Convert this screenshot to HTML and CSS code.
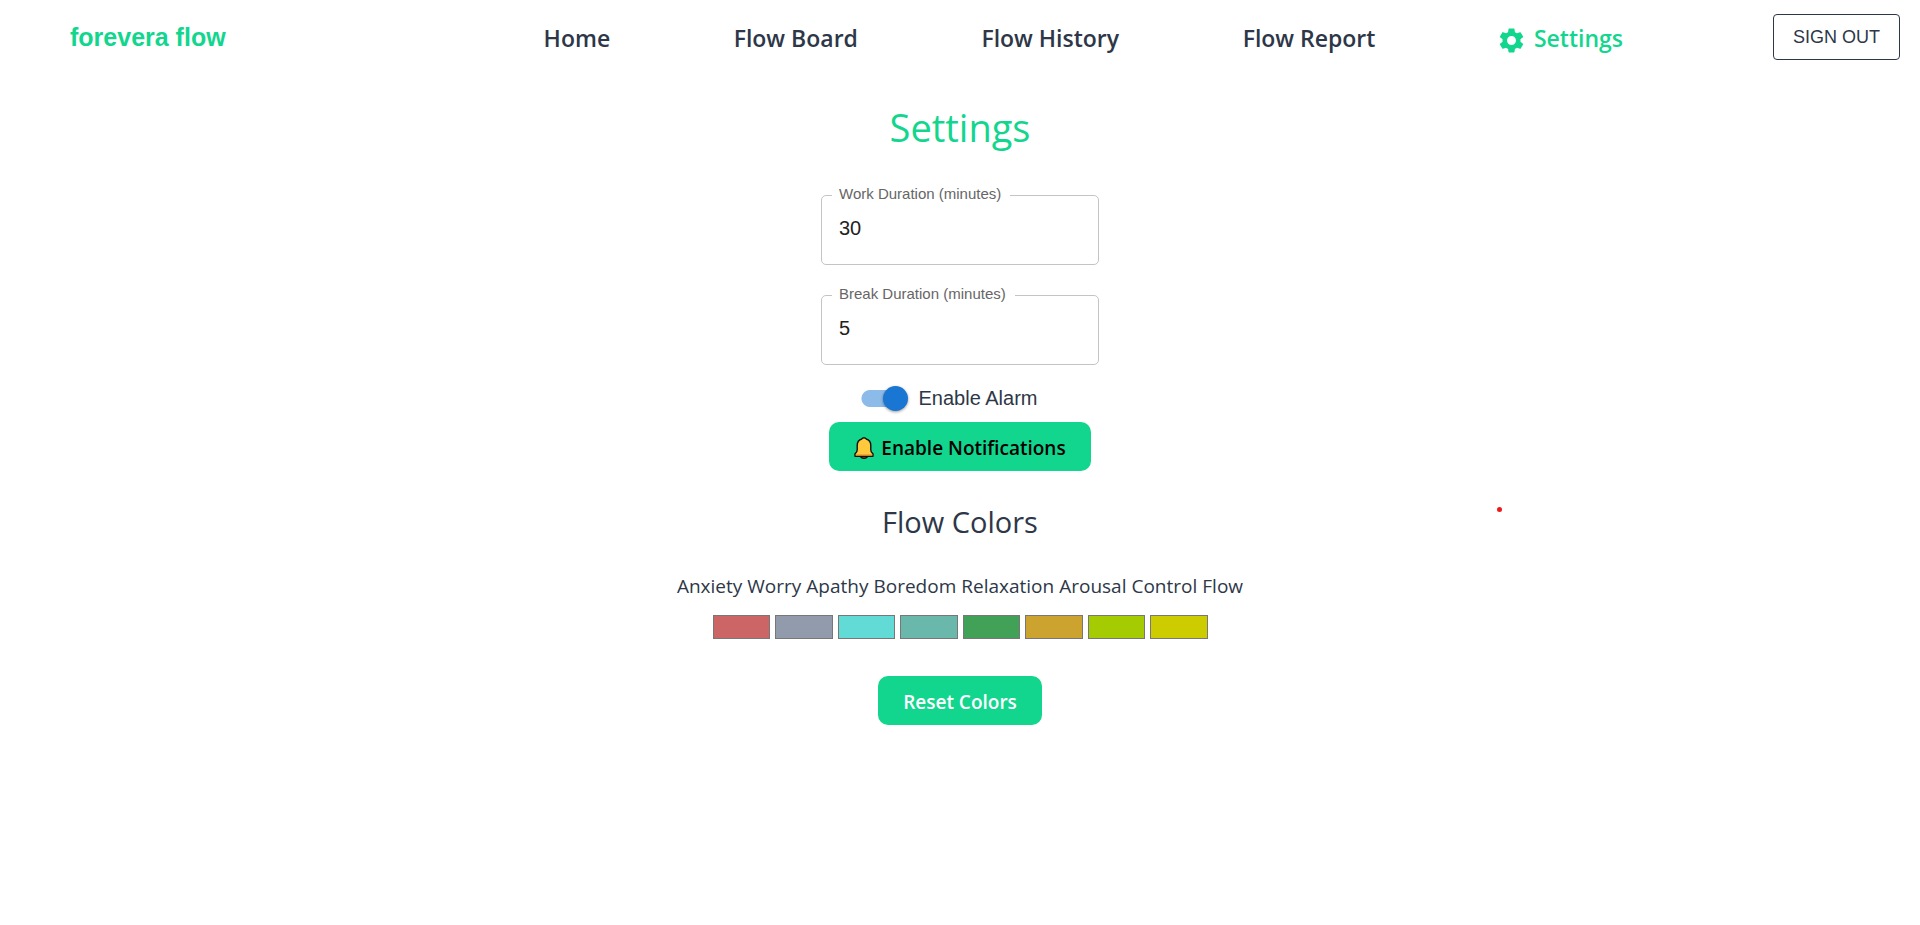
FILE: index.html
```
<!DOCTYPE html>
<html lang="en">
<head>
  <meta charset="utf-8">
  <title>forevera flow</title>
  <link rel="stylesheet" href="styles.css">
</head>
<body>
  <header class="topbar">
    <a class="brand" href="#">forevera flow</a>
    <nav class="nav">
      <a class="nav-link" href="#">Home</a>
      <a class="nav-link" href="#">Flow Board</a>
      <a class="nav-link" href="#">Flow History</a>
      <a class="nav-link" href="#">Flow Report</a>
      <a class="nav-link active" href="#" aria-current="page">
        <svg class="gear" viewBox="2 2 20 20" aria-hidden="true"><path fill="currentColor" d="M19.14 12.94c.04-.3.06-.61.06-.94 0-.32-.02-.64-.07-.94l2.03-1.58c.18-.14.23-.41.12-.61l-1.92-3.32c-.12-.22-.37-.29-.59-.22l-2.39.96c-.5-.38-1.03-.7-1.62-.94l-.36-2.54c-.04-.24-.24-.41-.48-.41h-3.84c-.24 0-.43.17-.47.41l-.36 2.54c-.59.24-1.13.57-1.62.94l-2.39-.96c-.22-.08-.47 0-.59.22L2.74 8.87c-.12.21-.08.47.12.61l2.03 1.58c-.05.3-.09.63-.09.94s.02.64.07.94l-2.03 1.58c-.18.14-.23.41-.12.61l1.92 3.32c.12.22.37.29.59.22l2.39-.96c.5.38 1.03.7 1.62.94l.36 2.54c.05.24.24.41.48.41h3.84c.24 0 .44-.17.47-.41l.36-2.54c.59-.24 1.13-.56 1.62-.94l2.39.96c.22.08.47 0 .59-.22l1.92-3.32c.12-.22.07-.47-.12-.61l-2.01-1.58zM12 15.6c-1.98 0-3.6-1.62-3.6-3.6s1.62-3.6 3.6-3.6 3.6 1.62 3.6 3.6-1.62 3.6-3.6 3.6z"/></svg>
        <span>Settings</span>
      </a>
    </nav>
    <button class="sign-out" type="button">SIGN OUT</button>
  </header>

  <main class="settings">
    <h1 class="title">Settings</h1>

    <div class="fields">
      <div class="field">
        <label class="field-label" for="work">Work Duration (minutes)</label>
        <input class="field-input" id="work" type="text" inputmode="numeric" value="30">
      </div>
      <div class="field">
        <label class="field-label" for="break">Break Duration (minutes)</label>
        <input class="field-input" id="break" type="text" inputmode="numeric" value="5">
      </div>
    </div>

    <label class="alarm"><input class="switch" type="checkbox" role="switch" checked>Enable Alarm</label>

    <button class="button notify" type="button">
      <svg class="bell" viewBox="0 0 20 22" aria-hidden="true">
        <path d="M6.600 18.800a3.400 2.600 0 0 0 6.800 0z" fill="#8a4b20" stroke="#111" stroke-width="1.300"/>
        <path d="M10 .8C8.900.8 8.200 1.300 7.800 2 4.800 2.900 3.200 5.300 3.200 8.500V13c0 1.800-.8 2.800-2.200 3.900v2.400h18v-2.400c-1.400-1.100-2.200-2.100-2.200-3.900V8.500c0-3.200-1.600-5.600-4.600-6.500C11.800 1.300 11.100.8 10 .8z" fill="#ffc83d" stroke="#111" stroke-width="1.400" stroke-linejoin="round"/>
        <path d="M1.700 17.400h16.600v1.200H1.700z" fill="#e8922e"/>
      </svg>
      <span>Enable Notifications</span>
    </button>

    <h2 class="subtitle">Flow Colors</h2>

    <div class="color-names">
      <label for="c1">Anxiety</label>
      <label for="c2">Worry</label>
      <label for="c3">Apathy</label>
      <label for="c4">Boredom</label>
      <label for="c5">Relaxation</label>
      <label for="c6">Arousal</label>
      <label for="c7">Control</label>
      <label for="c8">Flow</label>
    </div>
    <div class="swatches">
      <input class="swatch" id="c1" type="color" value="#cc6666">
      <input class="swatch" id="c2" type="color" value="#929bab">
      <input class="swatch" id="c3" type="color" value="#62dad5">
      <input class="swatch" id="c4" type="color" value="#69b8ab">
      <input class="swatch" id="c5" type="color" value="#41a157">
      <input class="swatch" id="c6" type="color" value="#cca32f">
      <input class="swatch" id="c7" type="color" value="#a5cc02">
      <input class="swatch" id="c8" type="color" value="#cccc00">
    </div>

    <button class="button reset" type="button">Reset Colors</button>
  </main>
  <span class="marker"></span>
</body>
</html>
```
FILE: styles.css
```
* {
  box-sizing: border-box;
}

body {
  margin: 0;
  background: #fff;
  color: #2d3748;
  font-family: "Segoe UI", "Open Sans", "Noto Sans", sans-serif;
  font-size: 19px;
}

.topbar {
  display: flex;
  align-items: center;
  height: 74px;
  padding: 0 20px 0 70px;
}

.brand {
  color: #12d68e;
  font: bold 25px/30px "Liberation Sans", Arial, sans-serif;
  text-decoration: none;
}

.nav {
  display: flex;
  flex: 1;
  align-items: center;
  justify-content: space-between;
  margin: 2px 150px 0 318px;
}

.nav-link {
  display: flex;
  align-items: center;
  gap: 10px;
  color: #2d3748;
  font-size: 23px;
  font-weight: 600;
  line-height: 34px;
  text-decoration: none;
  white-space: nowrap;
}

.nav-link.active {
  color: #12d68e;
}

.gear {
  width: 25px;
  height: 25px;
  margin-top: 5px;
}

.sign-out {
  height: 46px;
  padding: 0 19px;
  border: 1px solid #2d3748;
  border-radius: 4px;
  background: #fff;
  color: #2d3748;
  font: 18px "Liberation Sans", Arial, sans-serif;
}

.settings {
  display: flex;
  flex-direction: column;
  align-items: center;
}

.title {
  margin: 25px 0 0;
  color: #12d68e;
  font-size: 38px;
  font-weight: 400;
  line-height: 56px;
}

.fields {
  display: grid;
  gap: 30px;
  width: 278px;
  margin-top: 40px;
}

.field {
  position: relative;
}

.field-label {
  position: absolute;
  top: -10px;
  left: 11px;
  padding: 0 9px 0 7px;
  background: #fff;
  color: #666;
  font: 15px/18px "Liberation Sans", Arial, sans-serif;
}

.field-input {
  display: block;
  width: 100%;
  height: 70px;
  padding: 0 17px 4px;
  border: 1px solid #c4c4c4;
  border-radius: 5px;
  background: #fff;
  color: #212121;
  font: 20px "Liberation Sans", Arial, sans-serif;
}

.alarm {
  display: flex;
  align-items: center;
  gap: 11px;
  margin-top: 19px;
  padding-right: 22px;
  font: 20px/28px "Liberation Sans", Arial, sans-serif;
}

.switch {
  display: flex;
  align-items: center;
  appearance: none;
  width: 47px;
  height: 25px;
  margin: 0;
  background: radial-gradient(circle at 9px 50%, #8cbae9 8px, transparent 9px),
    linear-gradient(#8cbae9, #8cbae9) 9px center / 28px 17px no-repeat;
}

.switch::after {
  content: "";
  width: 25px;
  height: 25px;
  margin-left: auto;
  border-radius: 50%;
  background: #1976d2;
  box-shadow: 0 1px 3px rgba(0, 0, 0, 0.4);
}

.button {
  display: flex;
  align-items: center;
  justify-content: center;
  gap: 7px;
  height: 49px;
  padding: 2px 25px 0;
  border: 0;
  border-radius: 10px;
  background: #12d68e;
  font: 600 19px/28px "Segoe UI", "Open Sans", "Noto Sans", sans-serif;
}

.notify {
  margin-top: 10px;
  color: #000;
}

.bell {
  width: 20px;
  height: 22px;
}

.subtitle {
  margin: 30px 0 0;
  font-size: 29px;
  font-weight: 400;
  line-height: 42px;
}

.color-names {
  display: flex;
  flex-wrap: wrap;
  justify-content: center;
  gap: 5px;
  margin-top: 29px;
  line-height: 28px;
}

.swatches {
  display: grid;
  grid-template-columns: repeat(8, 1fr);
  gap: 5px;
  width: 495px;
  margin-top: 15px;
}

.swatch {
  appearance: none;
  width: 100%;
  height: 24px;
  padding: 0;
  border: 0;
  background: none;
}

.swatch::-webkit-color-swatch-wrapper {
  padding: 0;
}

.swatch::-webkit-color-swatch {
  border: 1px solid #777;
}

.reset {
  margin-top: 37px;
  color: #fff;
}

.marker {
  position: absolute;
  top: 507px;
  left: 1497px;
  width: 5px;
  height: 5px;
  border-radius: 50%;
  background: #f01818;
}
```
